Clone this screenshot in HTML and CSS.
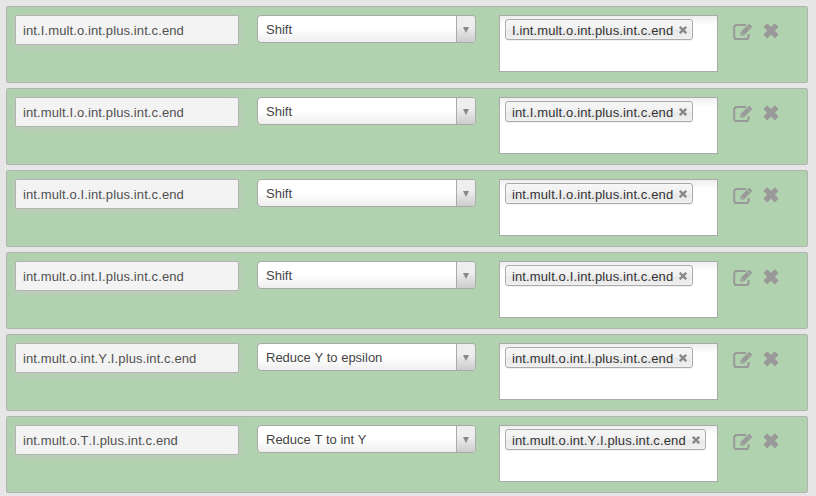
FILE: index.html
```
<!DOCTYPE html>
<html lang="en">
<head>
<meta charset="utf-8">
<title>Parse states</title>
<link rel="stylesheet" href="styles.css">
</head>
<body>
<svg class="symbols" aria-hidden="true">
  <symbol id="edit" viewBox="0 0 20 19">
    <path d="M13 2H3.8Q1.2 2 1.2 4.6V13.4Q1.2 16 3.8 16H13Q15.6 16 15.6 13.4V11" fill="none" stroke="currentColor" stroke-width="2"/>
    <path d="M7.5 9.2L15.5 1.2Q16.1.6 16.7 1.2L18.8 3.3Q19.4 3.9 18.8 4.5L10.8 12.5H7.5Z" fill="currentColor"/>
    <path d="M8.6 9.8L10.2 11.4M14.6 3.3L16.7 5.4" stroke="#b0d2ae" stroke-width=".8"/>
  </symbol>
  <symbol id="remove" viewBox="0 0 16 16">
    <path d="M3.7.7Q4.2.2 4.7.7L8 4L11.3.7Q11.8.2 12.3.7L15.1 3.5Q15.6 4 15.1 4.5L11.8 7.8L15.1 11.1Q15.6 11.6 15.1 12.1L12.3 14.9Q11.8 15.4 11.3 14.9L8 11.6L4.7 14.9Q4.2 15.4 3.7 14.9L.9 12.1Q.4 11.6.9 11.1L4.2 7.8L.9 4.5Q.4 4 .9 3.5Z" fill="currentColor"/>
  </symbol>
</svg>
<main class="rows" id="rows"></main>
<template id="row">
  <section class="row">
    <div class="field"></div>
    <div class="select"><span class="value"></span><span class="arrow"></span></div>
    <div class="multi"><span class="chip"><span class="label"></span><svg class="close" viewBox="0 0 8 8"><path d="M.8 .8L7.2 7.2M7.2 .8L.8 7.2" stroke="currentColor" stroke-width="2.3"/></svg></span></div>
    <div class="actions"><svg class="edit"><use href="#edit"/></svg><svg class="remove"><use href="#remove"/></svg></div>
  </section>
</template>
<script src="rows.js"></script>
</body>
</html>
```
FILE: rows.js
```
const rows = [
  ["int.I.mult.o.int.plus.int.c.end", "Shift", "I.int.mult.o.int.plus.int.c.end"],
  ["int.mult.I.o.int.plus.int.c.end", "Shift", "int.I.mult.o.int.plus.int.c.end"],
  ["int.mult.o.I.int.plus.int.c.end", "Shift", "int.mult.I.o.int.plus.int.c.end"],
  ["int.mult.o.int.I.plus.int.c.end", "Shift", "int.mult.o.I.int.plus.int.c.end"],
  ["int.mult.o.int.Y.I.plus.int.c.end", "Reduce Y to epsilon", "int.mult.o.int.I.plus.int.c.end"],
  ["int.mult.o.T.I.plus.int.c.end", "Reduce T to int Y", "int.mult.o.int.Y.I.plus.int.c.end"]
];
const template = document.getElementById("row");
for (const [state, action, previous] of rows) {
  const node = template.content.cloneNode(true);
  node.querySelector(".field").textContent = state;
  node.querySelector(".value").textContent = action;
  node.querySelector(".label").textContent = previous;
  document.getElementById("rows").append(node);
}
```
FILE: styles.css
```
* { box-sizing: border-box; }
body {
  margin: 0;
  height: 496px;
  overflow: hidden;
  background: #e6e6e6;
  color: #444;
  font: 13px "Liberation Sans", Arial, sans-serif;
  font-kerning: none;
}
.symbols { display: none; }
.rows {
  display: flex;
  flex-direction: column;
  gap: 5px;
  width: 802px;
  margin: 6px 0 0 6px;
}
.row {
  display: flex;
  align-items: flex-start;
  height: 77px;
  padding: 8px;
  border: 1px solid #b3b3b3;
  border-radius: 2px;
  background: #b0d2ae;
}
.field {
  width: 224px;
  height: 30px;
  margin-right: 18px;
  padding-left: 7px;
  border: 1px solid #b3b3b3;
  border-radius: 2px;
  background: #f3f3f3;
  color: #505050;
  line-height: 30px;
  letter-spacing: .11px;
  box-shadow: 0 2px 8px rgba(200, 200, 200, .7);
}
.select {
  display: flex;
  width: 219px;
  height: 28px;
  margin-right: 23px;
  border: 1px solid #aaa;
  border-radius: 4px;
  overflow: hidden;
  background: linear-gradient(#fff 50%, #eee);
  line-height: 27px;
}
.value { flex: 1; padding-left: 8px; }
.arrow {
  display: flex;
  justify-content: center;
  align-items: center;
  width: 19px;
  padding-top: 2px;
  border-left: 1px solid #aaa;
  background: linear-gradient(#eee 40%, #ccc);
}
.arrow::before {
  content: "";
  border: 3.5px solid transparent;
  border-top: 6px solid #888;
  border-bottom: 0;
}
.multi {
  width: 219px;
  height: 57px;
  margin-right: 15px;
  padding: 3px 5px;
  border: 1px solid #aaa;
  background: linear-gradient(#eee, #fff 9px);
}
.chip {
  display: flex;
  align-items: center;
  width: fit-content;
  height: 21px;
  padding: 0 5px 0 6px;
  border: 1px solid #aaa;
  border-radius: 3px;
  background: linear-gradient(#f4f4f4 20%, #f0f0f0 50%, #e8e8e8 52%, #eee);
  box-shadow: 0 0 2px #fff inset, 0 1px 0 rgba(0, 0, 0, .05);
  color: #333;
  letter-spacing: .12px;
}
.label { padding-top: 2px; }
.close { width: 8px; height: 8px; margin-left: 6px; color: #888; }
.actions { display: flex; padding-top: 8px; color: #999; }
.edit { width: 20px; height: 19px; }
.remove { width: 16px; height: 16px; margin: 0 0 0 9.5px; }
```
